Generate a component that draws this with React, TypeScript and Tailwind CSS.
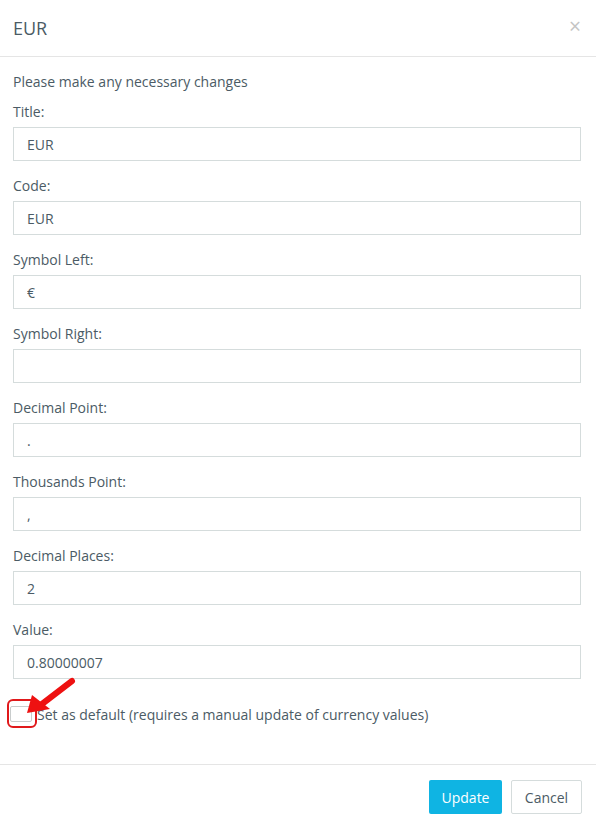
const fields = [
  { label: 'Title:', value: 'EUR' },
  { label: 'Code:', value: 'EUR' },
  { label: 'Symbol Left:', value: '€' },
  { label: 'Symbol Right:', value: '' },
  { label: 'Decimal Point:', value: '.' },
  { label: 'Thousands Point:', value: ',' },
  { label: 'Decimal Places:', value: '2' },
  { label: 'Value:', value: '0.80000007' },
]

export default function App() {
  return (
    <div
      className="w-[596px] h-[828px] bg-white text-[#4b5b65] text-[14px] overflow-hidden"
      style={{ fontFamily: '"Open Sans", "Liberation Sans", sans-serif' }}
    >
      {/* header */}
      <div className="h-[57px] border-b border-[#e5e5e5] flex items-center justify-between pl-[13px] pr-[15px]">
        <h4 className="text-[18px] text-[#4b5b65]">EUR</h4>
        <button className="text-[#c4c4c4] text-[21px] leading-none mt-[-4px]">×</button>
      </div>

      {/* body */}
      <div className="px-[13px] pr-[15px] pt-[15px] pb-[35px]">
        <p className="leading-[20px] mb-[10px]">Please make any necessary changes</p>
        {fields.map((f) => (
          <div key={f.label} className="mb-[15px]">
            <label className="block leading-[20px] mb-[5px]">{f.label}</label>
            <input
              readOnly
              value={f.value}
              className="w-full h-[34px] border border-[#d5dcdc] px-[13px] text-[14px] text-[#4b5b65] outline-none"
            />
          </div>
        ))}
        <div className="relative flex items-center h-[30px] mt-[20px]">
          <span className="w-[22px] h-[16px] ml-[-3px] mr-[5px] border border-[#c9cccc] rounded-[2px] bg-white" />
          <span>Set as default (requires a manual update of currency values)</span>
          {/* annotation */}
          <span className="absolute left-[-6px] top-[0px] w-[30px] h-[29px] border-2 border-[#e0191b] rounded-[6px]" />
          <svg className="absolute left-[-13px] top-[-33px]" width="80" height="60" viewBox="0 0 80 60">
            <line x1="72" y1="15" x2="42" y2="38" stroke="#ee1111" strokeWidth="6" strokeLinecap="round" />
            <polygon points="27,47 32,29 50,43" fill="#ee1111" />
          </svg>
        </div>
      </div>

      {/* footer */}
      <div className="border-t border-[#e5e5e5] flex justify-end gap-[9px] pt-[15px] pr-[14px]">
        <button className="h-[34px] w-[73px] bg-[#0fb4e3] text-white rounded-[2px]">Update</button>
        <button className="h-[34px] w-[71px] bg-white border border-[#d5dcdc] rounded-[2px] text-[#4b5b65]">Cancel</button>
      </div>
    </div>
  )
}
